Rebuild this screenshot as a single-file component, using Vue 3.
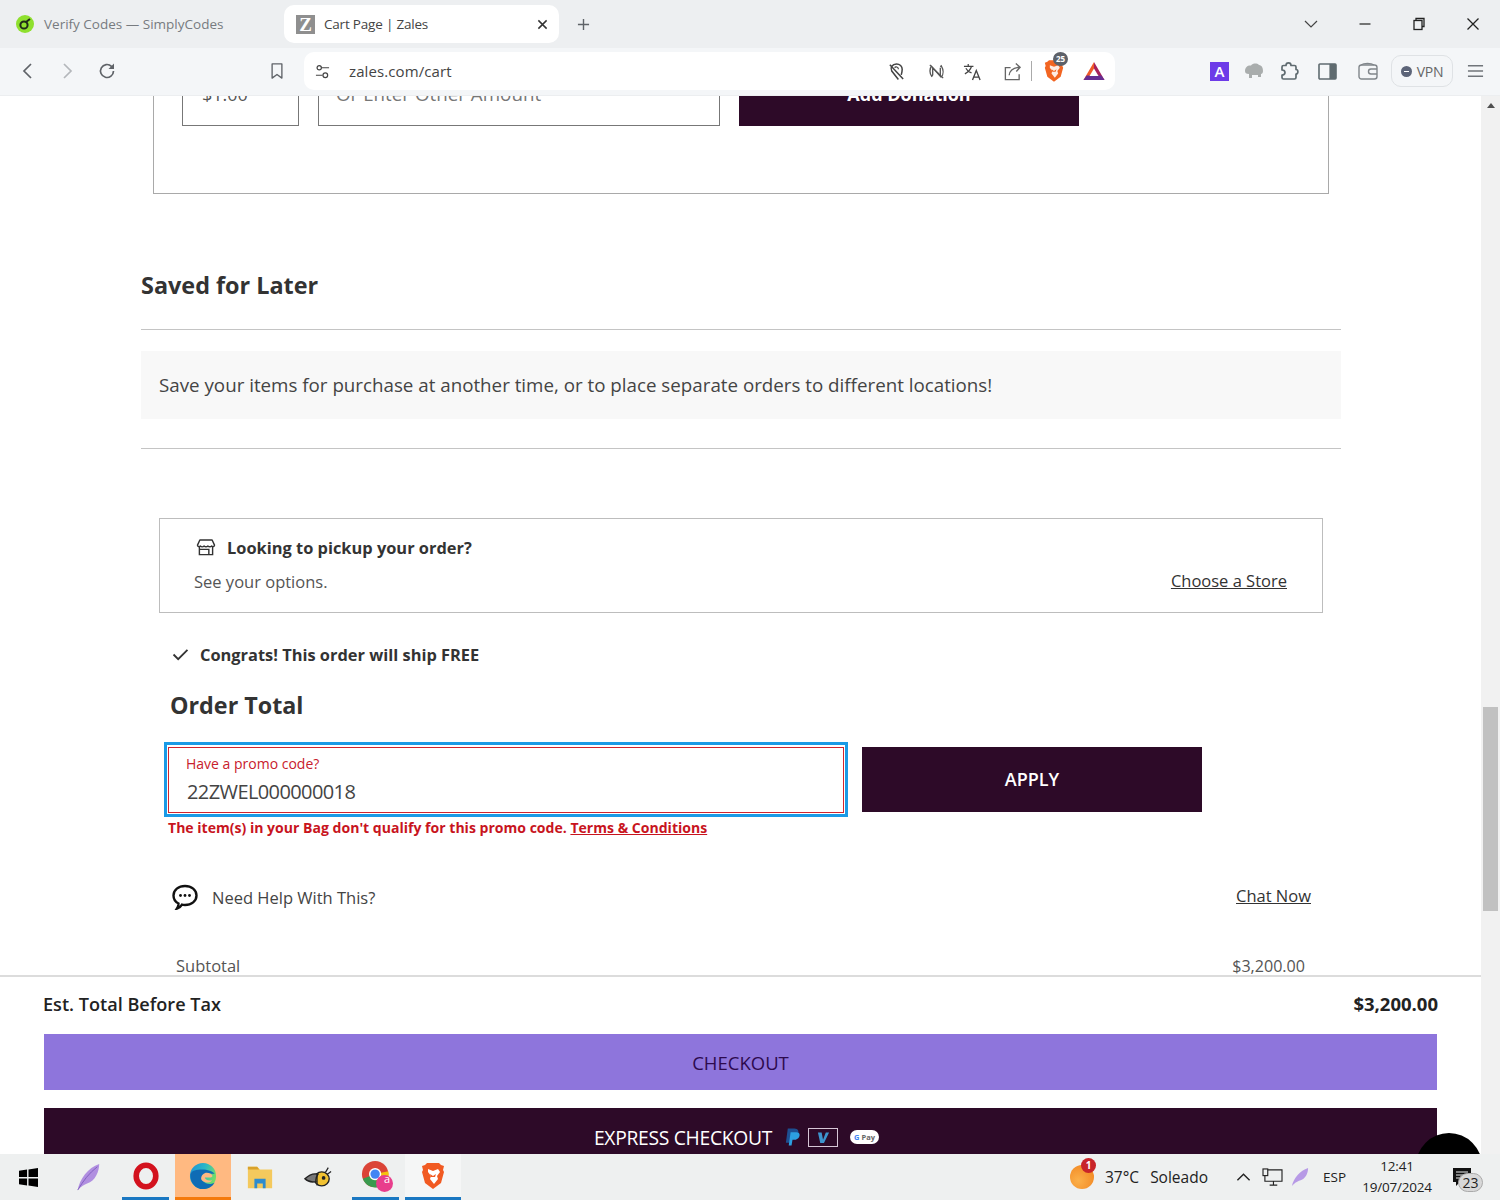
<template>
  <div class="screen">
    <!-- tab strip -->
    <div class="tabstrip">
      <div class="tab">
        <svg class="favicon" viewBox="0 0 18 18"><circle cx="9" cy="9" r="9" fill="#8fe02e"/><circle cx="8" cy="10" r="3.600" fill="none" stroke="#1f2a1a" stroke-width="2"/><path d="M10 7l4-3" stroke="#1f2a1a" stroke-width="2"/></svg>
        <span>Verify Codes — SimplyCodes</span>
      </div>
      <div class="tab active">
        <span class="z-icon">Z</span>
        <span class="tab-title">Cart Page | Zales</span>
        <svg class="tab-close" viewBox="0 0 12 12"><path d="M1.500 1.500l9 9M10.500 1.500l-9 9" stroke="#333" stroke-width="1.600"/></svg>
      </div>
      <svg class="new-tab" viewBox="0 0 14 14"><path d="M7 1v12M1 7h12" stroke="#5f6368" stroke-width="1.500"/></svg>
      <div class="win-controls">
        <svg class="win-btn chev" viewBox="0 0 14 14"><path d="M1 4l6 6 6-6" fill="none" stroke="#444" stroke-width="1.200"/></svg>
        <svg class="win-btn" viewBox="0 0 14 14"><path d="M1.500 7h11" stroke="#222" stroke-width="1.200"/></svg>
        <svg class="win-btn" viewBox="0 0 14 14"><path d="M4 3.500V1.500h8v8h-2" fill="none" stroke="#222" stroke-width="1.300"/><rect x="2" y="3.500" width="8" height="9" fill="none" stroke="#222" stroke-width="1.300"/></svg>
        <svg class="win-btn" viewBox="0 0 14 14"><path d="M1.500 1.500l11 11M12.500 1.500l-11 11" stroke="#222" stroke-width="1.300"/></svg>
      </div>
    </div>

    <!-- toolbar -->
    <div class="toolbar">
      <svg class="tb-icon back" viewBox="0 0 18 18"><path d="M12 2L5 9l7 7" fill="none" stroke="#5f6368" stroke-width="1.700"/></svg>
      <svg class="tb-icon forward" viewBox="0 0 18 18"><path d="M6 2l7 7-7 7" fill="none" stroke="#b4b7bb" stroke-width="1.700"/></svg>
      <svg class="tb-icon reload" viewBox="0 0 20 20"><path d="M16.500 10a6.500 6.500 0 1 1-2-4.700L16.500 7" fill="none" stroke="#5f6368" stroke-width="1.700"/><path d="M17 2.500V8h-5.500z" fill="#5f6368"/></svg>
      <svg class="tb-icon bookmark" viewBox="0 0 18 20"><path d="M3.500 2h11v16L9 14l-5.500 4z" fill="none" stroke="#5f6368" stroke-width="1.500" stroke-linejoin="round"/></svg>

      <div class="address">
        <svg class="tune" viewBox="0 0 16 16"><circle cx="4.500" cy="4" r="2.300" fill="none" stroke="#444" stroke-width="1.300"/><path d="M7 4h8M1 12h7" stroke="#444" stroke-width="1.300"/><circle cx="11" cy="12" r="2.500" fill="none" stroke="#444" stroke-width="1.300"/></svg>
        <span class="url">zales.com/cart</span>
        <div class="addr-icons">
          <svg class="ai one" viewBox="0 0 20 20"><path d="M12 18.500L5 9.500C3 6 5.500 2 10 2c3.500 0 6 2.500 6 5.500 0 2-.5 4-1 6" fill="none" stroke="#444" stroke-width="1.600"/><path d="M3 3l14 15" stroke="#444" stroke-width="1.600"/><path d="M8 6c1-1.500 4-1 4 1.500" fill="none" stroke="#444" stroke-width="1.300"/></svg>
          <svg class="ai two" viewBox="0 0 20 20"><path d="M5 4C2.500 7 2.500 12 5 15l1-1M15 16c2.500-3 2.500-8 0-12l-1 1M6 14V6l8 9V6" fill="none" stroke="#555" stroke-width="1.400"/><path d="M3 3l14 14" stroke="#555" stroke-width="1.400"/></svg>
          <svg class="ai three" viewBox="0 0 20 20"><path d="M1 4.500h10M5.500 2v2.500M9 4.500C8 8 5.500 10.500 2 12.500M3 6.500c1 2 3 4 6 5" fill="none" stroke="#444" stroke-width="1.300"/><path d="M10 19l4-10 4 10M11.300 16h5.400" fill="none" stroke="#444" stroke-width="1.400"/></svg>
          <svg class="ai four" viewBox="0 0 20 20"><path d="M8 6H2.500v12.500H17V13" fill="none" stroke="#666" stroke-width="1.400"/><path d="M6.500 14c.5-5 4-8 11-8.500M13.500 1.500L18 5.500l-4 4.500" fill="none" stroke="#666" stroke-width="1.400"/></svg>
          <span class="addr-sep"></span>
          <div class="brave-wrap">
            <svg class="brave" viewBox="0 0 24 28"><path d="M6 1h12l2 2 3 1-1 4 1 2-3 11-8 6-8-6L1 10l1-2-1-4 3-1z" fill="#f26522"/><path d="M7 7l5 2 5-2 2 3-3 4 1 3-4 5-4-5 1-3-3-4z" fill="#fff" opacity=".88"/><path d="M9 12l3 2 3-2-1 3h-4z" fill="#f26522"/></svg>
            <span class="shield-badge">25</span>
          </div>
          <svg class="bat" viewBox="0 0 22 20"><path d="M11 1l10.500 18h-5.500L11 10z" fill="#a8205a"/><path d="M11 1L.5 19H6l5-9z" fill="#f05a28"/><path d="M.5 19h21l-3-4.500h-15z" fill="#662d91"/><path d="M11 7.500l4.500 7.500h-9z" fill="#fff"/></svg>
        </div>
      </div>

      <div class="ext-row">
        <span class="ext-a">A</span>
        <svg class="ext elephant" viewBox="0 0 20 18"><path d="M1 9c0-4 3-6 6-5.500C9 1 13 1 15 3c3 .5 4 3 4 6 0 2-1 3-2 3v3h-3v-2H8v3H5v-4C2 12 1 11 1 9z" fill="#a9adad"/></svg>
        <svg class="ext puzzle" viewBox="0 0 20 20"><path d="M3 6c0-1 .5-1.500 1.500-1.500H7C7 1 12 1 12 4.500h3.500c1 0 1.500.5 1.500 1.500v2.500c2.500 0 2.500 4.500 0 4.500v3.500c0 1-.5 1.500-1.500 1.500h-11C3.500 18 3 17.500 3 16.500V14c2 0 3-1 3-2.500S5 9 3 9z" fill="none" stroke="#5f6b70" stroke-width="1.700" stroke-linejoin="round"/></svg>
        <svg class="ext panel" viewBox="0 0 20 18"><rect x="1" y="1" width="18" height="16" rx="1" fill="none" stroke="#5f6b70" stroke-width="1.700"/><rect x="12" y="1" width="7" height="16" fill="#5f6b70"/></svg>
        <svg class="ext wallet" viewBox="0 0 20 18"><rect x="1" y="3" width="18" height="14" rx="2.500" fill="none" stroke="#80868b" stroke-width="1.400"/><path d="M3 3c3-2 10-2 13 0M19 7h-6a2.500 2.500 0 0 0 0 5h6" fill="none" stroke="#80868b" stroke-width="1.400"/></svg>
        <div class="vpn"><span class="vpn-dot"></span>VPN</div>
        <svg class="ext menu" viewBox="0 0 18 14"><path d="M1 1.500h16M1 7h16M1 12.500h16" stroke="#70757a" stroke-width="1.600"/></svg>
      </div>
    </div>

    <!-- viewport -->
    <div class="viewport">
      <div class="page">
        <div class="scroller">
          <div class="donation">
            <div class="select-box"><span>$1.00</span><span class="caret"></span></div>
            <div class="amount-box">Or Enter Other Amount</div>
            <div class="donate-btn">Add Donation</div>
          </div>

          <div class="saved">
            <h2 class="saved-title">Saved for Later</h2>
            <div class="rule first"></div>
            <div class="saved-note">Save your items for purchase at another time, or to place separate orders to different locations!</div>
            <div class="rule second"></div>
          </div>

          <div class="pickup">
            <div class="pickup-head">
              <svg class="store" viewBox="0 0 20 18"><path d="M3.500 1h13l2.500 5.500c0 1.500-2 2-3 1-1 1-3 1-4 0-1 1-3 1-4 0-1 1-3 1-4 0-1 1-3 .5-3-1z" fill="none" stroke="#333" stroke-width="1.500" stroke-linejoin="round"/><path d="M3 8v8.500h14V8M3.500 11h9.500v5.500" fill="none" stroke="#333" stroke-width="1.500"/></svg>
              <b>Looking to pickup your order?</b>
            </div>
            <div class="pickup-foot">
              <span>See your options.</span>
              <a class="link">Choose a Store</a>
            </div>
          </div>

          <div class="congrats">
            <svg class="check" viewBox="0 0 18 14"><path d="M1.500 7l5 5 10-10" fill="none" stroke="#333" stroke-width="2"/></svg>
            <b>Congrats! This order will ship FREE</b>
          </div>

          <h2 class="order-title">Order Total</h2>

          <div class="promo-row">
            <div class="promo-focus">
              <div class="promo-field">
                <div class="promo-label">Have a promo code?</div>
                <div class="promo-value">22ZWEL000000018</div>
              </div>
            </div>
            <div class="apply">APPLY</div>
          </div>
          <div class="promo-error">The item(s) in your Bag don't qualify for this promo code. <a>Terms &amp; Conditions</a></div>

          <div class="help">
            <svg class="bubble" viewBox="0 0 26 26"><path d="M13 2c6.500 0 11.500 4 11.500 9.500S19.500 21 13 21c-1 0-2 0-3-.3-1 1.800-2.500 3-5 3.800 1-1.500 1.500-3 1.500-5C3.500 18 1.500 15 1.500 11.500 1.500 6 6.500 2 13 2z" fill="#fff" stroke="#111" stroke-width="2.400"/><circle cx="8.500" cy="11.500" r="1.400" fill="#111"/><circle cx="13" cy="11.500" r="1.400" fill="#111"/><circle cx="17.500" cy="11.500" r="1.400" fill="#111"/></svg>
            <span class="help-text">Need Help With This?</span>
            <a class="link chat">Chat Now</a>
          </div>

          <div class="subtotal">
            <span>Subtotal</span>
            <span class="subtotal-value">$3,200.00</span>
          </div>
        </div>

        <div class="chat-fab"></div>

        <div class="sticky">
          <div class="est-row">
            <span>Est. Total Before Tax</span>
            <b>$3,200.00</b>
          </div>
          <div class="checkout">CHECKOUT</div>
          <div class="express">
            <span>EXPRESS CHECKOUT</span>
            <svg class="paypal" viewBox="0 0 18 20"><path d="M4 1h7c4 0 5 3 4 6s-3 4-6 4H7l-1 5H2z" fill="#1d4f91"/><path d="M7 5h6c4 0 4 3 3 5s-3 3-5 3H9l-1 6H5z" fill="#2c9fe0"/></svg>
            <span class="venmo"><svg viewBox="0 0 16 14"><path d="M2 1.500h4l1.500 8 3-8h3.500L8.500 13H4.500z" fill="#3d95ce"/></svg></span>
            <span class="gpay"><span class="g">G</span> Pay</span>
          </div>
        </div>
      </div>

      <div class="scrollbar">
        <span class="sb-up"></span>
        <div class="sb-thumb"></div>
      </div>
    </div>

    <!-- taskbar -->
    <div class="taskbar">
      <svg class="win-logo" viewBox="0 0 20 20"><path d="M0 3l8.500-1.300v7.800H0zM10 1.500L20 0v9.500H10zM0 11h8.500v7.500L0 17.200zM10 11h10v9l-10-1.500z" fill="#000"/></svg>
      <div class="task feather-cell">
        <svg class="t-icon" viewBox="0 0 28 30"><path d="M3 29C5 17 14 5 26 1c0 8-4 18-13 21-3 1-6 3-10 7z" fill="#b08fe0"/><path d="M3 29C9 19 15 11 24 4" stroke="#7f5cc0" stroke-width="1" fill="none"/></svg>
      </div>
      <div class="task opera running">
        <svg class="t-icon" viewBox="0 0 28 30"><ellipse cx="14" cy="15" rx="10.500" ry="11.500" fill="none" stroke="#d3121e" stroke-width="6"/></svg>
      </div>
      <div class="task edge">
        <svg class="t-icon edge-icon" viewBox="0 0 30 30">
          <defs>
            <linearGradient id="edgeTop" x1="0" y1="0" x2="1" y2="0.400"><stop offset="0" stop-color="#1b8fd6"/><stop offset=".55" stop-color="#2bb7c8"/><stop offset="1" stop-color="#6fdc6a"/></linearGradient>
          </defs>
          <circle cx="15" cy="15" r="14" fill="url(#edgeTop)"/>
          <path d="M1.500 13C1 22 7 29 15 29c5 0 10-2 12.500-7-3 2-7 2-10 .5-3-1.500-4-4.500-3-7 1-2 3-3 6-3h7C25 10 20 8 14 8 8 8 3 9 1.500 13z" fill="#0f6cb5"/>
          <path d="M13 18c0-4 3-6.500 6-6.500 3 0 5 1 6 3 .5 1-.5 2-2 2h-6c0 2 3 4 8 3-3 3-6 3-8 2-2-.5-4-2-4-3.500z" fill="#ffb981"/>
        </svg>
      </div>
      <div class="task explorer">
        <svg class="t-icon" viewBox="0 0 30 28"><path d="M2 3h10l3 3h13v20H2z" fill="#f4c95d"/><path d="M2 3h10l2 3H2z" fill="#d9a22b"/><path d="M9 16h12v10h-3v-5h-6v5H9z" fill="#2e8ccf"/></svg>
      </div>
      <div class="task bee">
        <svg class="t-icon" viewBox="0 0 30 26"><ellipse cx="19" cy="15" rx="8" ry="7.500" fill="#f1c232" stroke="#222" stroke-width="1.500"/><path d="M1 15c5-5 10-6 14-5-2 3-3 5-2 8-5 1-9 0-12-3z" fill="#777" stroke="#222" stroke-width="1.500"/><circle cx="21" cy="14" r="2" fill="#222"/><path d="M14 9v13M23 8l3-5M25 10l4-3" stroke="#222" stroke-width="1.300"/></svg>
      </div>
      <div class="task chrome running">
        <svg class="t-icon big" viewBox="0 0 34 34"><circle cx="15" cy="15" r="14" fill="#db4437"/><path d="M15 15L29 12a14 14 0 0 1-11 17z" fill="#f4c20d"/><path d="M15 15l3 14A14 14 0 0 1 2 20z" fill="#3a9b4f"/><circle cx="15" cy="15" r="6.500" fill="#fff"/><circle cx="15" cy="15" r="5" fill="#4285f4"/><circle cx="25" cy="25" r="9" fill="#e83e8c"/></svg>
        <span class="profile-a">a</span>
      </div>
      <div class="task brave-task running wide">
        <svg class="t-icon" viewBox="0 0 24 28"><path d="M6 1h12l2 2 3 1-1 4 1 2-3 11-8 6-8-6L1 10l1-2-1-4 3-1z" fill="#f15a22"/><path d="M7 7l5 2 5-2 2 3-3 4 1 3-4 5-4-5 1-3-3-4z" fill="#fff"/><path d="M9 12l3 2 3-2-1 3h-4z" fill="#f15a22"/></svg>
      </div>

      <div class="tray">
        <div class="orb"><span class="orb-badge">1</span></div>
        <span class="temp">37°C</span>
        <span class="sky">Soleado</span>
        <svg class="tray-caret" viewBox="0 0 16 10"><path d="M1.500 8.500L8 2l6.500 6.500" fill="none" stroke="#222" stroke-width="1.500"/></svg>
        <svg class="tray-monitor" viewBox="0 0 22 20"><path d="M5 2h16v12H3V8M8 18h8M12 14v4" fill="none" stroke="#222" stroke-width="1.200"/><rect x="1" y="1" width="5" height="7" fill="#eef0f0" stroke="#222" stroke-width="1.200"/></svg>
        <svg class="tray-feather" viewBox="0 0 20 22"><path d="M1 21C3 12 10 4 19 1c0 6-3 12-9 14-3 1-5 2-9 6z" fill="#b79ae6"/></svg>
        <span class="lang">ESP</span>
        <div class="clock"><span>12:41</span><span>19/07/2024</span></div>
        <div class="notif">
          <svg viewBox="0 0 20 20"><path d="M1 1h18v14H8l-4 4v-4H1z" fill="#111"/><path d="M4 5h12M4 8h12M4 11h8" stroke="#eef0f0" stroke-width="1.200"/></svg>
          <span class="notif-count">23</span>
        </div>
      </div>
    </div>
  </div>
</template>

<script setup>
</script>

<style>
html, body { margin: 0; background: #fff; overflow: hidden; }
</style>

<style scoped>
.screen {
  width: 1500px;
  height: 1200px;
  display: flex;
  flex-direction: column;
  overflow: hidden;
  font-family: "Open Sans", "Liberation Sans", sans-serif;
  color: #333;
  background: #fff;
}

/* tab strip */
.tabstrip {
  height: 48px;
  flex: none;
  background: #edeff1;
  display: flex;
  align-items: flex-start;
  font-size: 14px;
}
.tab {
  height: 38px;
  margin-top: 5px;
  display: flex;
  align-items: center;
  width: 284px;
  box-sizing: border-box;
  padding-left: 16px;
  color: #777b80;
  font-size: 13.500px;
}
.favicon { width: 18px; height: 18px; margin-right: 10px; }
.tab.active {
  width: 275px;
  background: #fff;
  border-radius: 10px;
  padding-left: 12px;
  color: #444;
  letter-spacing: -0.2px;
}
.z-icon {
  width: 19px;
  height: 19px;
  background: #8f8f8f;
  color: #fff;
  font: bold 19px/19px "Liberation Serif", serif;
  text-align: center;
  margin-right: 9px;
}
.tab-title { flex: 1; }
.tab-close { width: 11px; height: 11px; margin-right: 11px; }
.new-tab { width: 13px; height: 13px; margin: 18px 0 0 18px; }
.win-controls { margin-left: auto; display: flex; margin-top: 17px; }
.win-btn { width: 14px; height: 14px; margin-right: 40px; }
.win-btn.chev { margin-right: 40px; }
.win-controls .win-btn:last-child { margin-right: 20px; }

/* toolbar */
.toolbar {
  height: 47px;
  box-sizing: border-box;
  padding-bottom: 1px;
  flex: none;
  background: #f4f6f8;
  display: flex;
  align-items: center;
  position: relative;
  z-index: 2;
  box-shadow: 0 1px 0 #eceef0;
}
.tb-icon { height: 18px; width: 18px; flex: none; }
.back { margin-left: 19px; }
.forward { margin-left: 21px; }
.reload { margin-left: 21px; width: 20px; height: 20px; }
.bookmark { margin-left: 152px; width: 16px; }
.address {
  margin-left: 19px;
  width: 811px;
  height: 38px;
  background: #fff;
  border-radius: 10px;
  display: flex;
  align-items: center;
  flex: none;
}
.tune { width: 15px; height: 15px; margin-left: 11px; }
.url { margin-left: 19px; font-size: 15px; color: #444; letter-spacing: 0.1px; }
.addr-icons { margin-left: auto; display: flex; align-items: center; }
.ai { width: 19px; height: 19px; flex: none; }
.two { margin-left: 21px; }
.three { margin-left: 17px; }
.four { margin-left: 21px; }
.addr-sep { width: 1px; height: 20px; background: #aaa; margin-left: 9px; }
.brave-wrap { position: relative; margin-left: 12px; width: 20px; height: 24px; }
.brave { width: 20px; height: 24px; display: block; }
.shield-badge {
  position: absolute;
  top: -7px;
  left: 9px;
  width: 15px;
  height: 14px;
  border-radius: 50%;
  background: #5c6068;
  color: #fff;
  font-size: 8px;
  font-weight: 700;
  line-height: 14px;
  text-align: center;
}
.bat { width: 22px; height: 20px; margin: 0 10px 0 19px; }
.ext-row { display: flex; align-items: center; flex: none; }
.ext-a {
  width: 19px;
  height: 19px;
  margin-left: 95px;
  background: #6d3be8;
  color: #fff;
  font-size: 15px;
  font-weight: 600;
  line-height: 19px;
  text-align: center;
}
.ext { flex: none; }
.elephant { width: 20px; height: 18px; margin-left: 15px; }
.puzzle { width: 20px; height: 20px; margin-left: 15px; }
.panel { width: 19px; height: 17px; margin-left: 19px; }
.wallet { width: 20px; height: 18px; margin-left: 21px; }
.vpn {
  margin-left: 13px;
  width: 62px;
  height: 32px;
  box-sizing: border-box;
  border: 1px solid #dfe2e5;
  border-radius: 10px;
  display: flex;
  align-items: center;
  justify-content: center;
  gap: 5px;
  font-size: 14px;
  color: #666;
  letter-spacing: -0.3px;
}
.vpn-dot {
  width: 11px;
  height: 11px;
  border-radius: 50%;
  background: #5c6478;
  position: relative;
}
.vpn-dot::after {
  content: "";
  position: absolute;
  left: 3px;
  top: 5px;
  width: 5px;
  height: 1px;
  background: #fff;
}
.menu { width: 17px; height: 14px; margin-left: 14px; }

/* page viewport */
.viewport {
  height: 1059px;
  flex: none;
  display: flex;
  overflow: hidden;
}
.page {
  width: 1481px;
  flex: none;
  position: relative;
  overflow: hidden;
}
.scroller { margin-top: -59px; }
.donation {
  margin-left: 153px;
  width: 1176px;
  box-sizing: border-box;
  border: 1px solid #a9a9a9;
  padding: 25px 0 67px 28px;
  display: flex;
  align-items: stretch;
  height: 158px;
}
.select-box, .amount-box {
  box-sizing: border-box;
  height: 64px;
  border: 1px solid #777;
  display: flex;
  align-items: center;
  color: #555;
  font-size: 18px;
}
.select-box { width: 117px; padding: 0 11px 0 19px; justify-content: space-between; }
.caret { width: 0; height: 0; border: 4px solid transparent; border-top: 4px solid #333; border-bottom: 0; }
.amount-box { width: 402px; margin-left: 19px; padding-left: 17px; color: #777; font-size: 18.800px; }
.donate-btn {
  width: 340px;
  height: 64px;
  margin-left: 19px;
  background: #2d0a28;
  color: #fff;
  font-weight: 700;
  font-size: 18px;
  display: flex;
  align-items: center;
  justify-content: center;
}

.saved { margin: 0 0 0 141px; width: 1200px; }
.saved-title { margin: 75px 0 0; font-size: 23.400px; line-height: 32px; font-weight: 700; color: #333; }
.rule { height: 1px; background: #c4c4c4; }
.rule.first { margin-top: 28px; }
.saved-note {
  margin-top: 21px;
  height: 68px;
  box-sizing: border-box;
  padding-left: 18px;
  background: #f8f8f8;
  font-size: 18.750px;
  line-height: 67px;
  color: #444;
}
.rule.second { margin-top: 29px; }

.pickup {
  margin: 69px 0 0 159px;
  width: 1164px;
  height: 95px;
  box-sizing: border-box;
  border: 1px solid #bdbdbd;
  padding: 16px 35px 0 34px;
}
.pickup-head { display: flex; align-items: center; font-size: 16.400px; height: 24px; color: #333; }
.store { width: 20px; height: 17px; margin: 0 11px 0 2px; }
.pickup-head b { font-weight: 700; }
.pickup-foot {
  margin-top: 10px;
  display: flex;
  justify-content: space-between;
  align-items: center;
  height: 24px;
  font-size: 16.500px;
  color: #555;
}
.link { color: #333; text-decoration: underline; font-size: 16.500px; }
.pickup-foot .link { position: relative; top: -1px; }

.congrats {
  margin: 29px 0 0 172px;
  height: 24px;
  display: flex;
  align-items: center;
  font-size: 16.400px;
}
.check { width: 17px; height: 13px; margin-right: 11px; }
.congrats b { font-weight: 700; }
.order-title {
  margin: 22px 0 0 170px;
  font-size: 23.300px;
  line-height: 34px;
  font-weight: 700;
  color: #333;
}

.promo-row { margin: 20px 0 0 164px; display: flex; align-items: flex-start; }
.promo-focus {
  width: 684px;
  height: 75px;
  box-sizing: border-box;
  border: 3px solid #1a9ae6;
  padding: 2px 1px 1px;
}
.promo-field {
  height: 66px;
  box-sizing: border-box;
  border: 1px solid #d0242e;
  padding: 6px 0 0 17px;
}
.promo-label { font-size: 14px; line-height: 20px; color: #c8202c; }
.promo-value {
  font-size: 20px;
  line-height: 28px;
  margin: 4px 0 0 1px;
  color: #444;
  letter-spacing: -0.600px;
}
.apply {
  width: 340px;
  height: 65px;
  box-sizing: border-box;
  padding-bottom: 2px;
  margin: 5px 0 0 14px;
  background: #2d0a28;
  color: #fff;
  font-size: 18px;
  font-weight: 600;
  display: flex;
  align-items: center;
  justify-content: center;
}
.promo-error {
  margin: 0 0 0 168px;
  font-size: 14.050px;
  line-height: 22px;
  font-weight: 700;
  color: #c8141e;
}
.promo-error a { text-decoration: underline; }

.help {
  margin: 44px 0 0 172px;
  width: 1139px;
  height: 28px;
  display: flex;
  align-items: center;
}
.bubble { width: 26px; height: 26px; }
.help-text { margin-left: 14px; font-size: 16.500px; color: #444; }
.chat { margin-left: auto; position: relative; top: -2px; }

.subtotal {
  margin: 43px 0 0 176px;
  width: 1129px;
  display: flex;
  justify-content: space-between;
  font-size: 16.500px;
  line-height: 24px;
  color: #555;
}
.subtotal-value { font-size: 16.100px; }

/* things over the page */
.chat-fab {
  position: absolute;
  left: 1416px;
  top: 1038px;
  width: 66px;
  height: 66px;
  border-radius: 50%;
  background: #000;
  z-index: 3;
}
.sticky {
  position: absolute;
  left: 0;
  right: 0;
  top: 880px;
  bottom: 0;
  box-sizing: border-box;
  background: #fff;
  border-top: 2px solid #dcdcdc;
  padding: 0 44px 0 44px;
  z-index: 2;
}
.est-row {
  height: 57px;
  box-sizing: border-box;
  padding-bottom: 4px;
  display: flex;
  justify-content: space-between;
  align-items: center;
  font-size: 18.100px;
  font-weight: 600;
  color: #222;
  margin: 0 0 0 -1px;
}
.est-row b { font-weight: 700; position: relative; left: 1px; font-size: 18.500px; }
.checkout {
  height: 56px;
  background: #8e75dc;
  color: #2d0a4e;
  font-size: 18.500px;
  text-align: center;
  line-height: 58px;
}
.express {
  margin-top: 18px;
  height: 46px;
  background: #2d0a28;
  color: #fff;
  font-size: 19.300px;
  display: flex;
  align-items: center;
  justify-content: center;
  padding: 12px 8px 0 0;
  box-sizing: border-box;
  letter-spacing: -0.3px;
  white-space: nowrap;
}
.paypal { width: 17px; height: 20px; margin-left: 12px; }
.venmo {
  width: 30px;
  height: 19px;
  margin-left: 7px;
  box-sizing: border-box;
  border: 1px solid #d6c6d6;
  display: flex;
  align-items: center;
  justify-content: center;
}
.venmo svg { width: 15px; height: 13px; }
.gpay {
  width: 29px;
  height: 14px;
  margin-left: 12px;
  border-radius: 7px;
  background: #fff;
  color: #666;
  font-size: 7.500px;
  font-weight: 700;
  line-height: 14px;
  text-align: center;
  letter-spacing: 0;
}
.g { color: #4285f4; }

.scrollbar {
  width: 19px;
  flex: none;
  background: #f1f1f1;
  position: relative;
}
.sb-up {
  display: block;
  width: 0;
  height: 0;
  margin: 8px auto 0;
  border: 4px solid transparent;
  border-bottom: 5px solid #505050;
  border-top: 0;
}
.sb-thumb {
  position: absolute;
  top: 612px;
  left: 2px;
  width: 15px;
  height: 204px;
  background: #c1c1c1;
}

/* taskbar */
.taskbar {
  height: 46px;
  flex: none;
  background: #eef0f0;
  display: flex;
  align-items: center;
  position: relative;
  z-index: 4;
  font-family: "Open Sans", "Liberation Sans", sans-serif;
  color: #222;
}
.win-logo { width: 19px; height: 19px; margin-left: 19px; flex: none; }
.task {
  height: 46px;
  box-sizing: border-box;
  display: flex;
  align-items: center;
  justify-content: center;
  flex: none;
  position: relative;
}
.t-icon { width: 28px; height: 28px; }
.t-icon.big { width: 32px; height: 32px; margin-left: 2px; }
.feather-cell { width: 28px; margin-left: 36px; }
.opera { width: 47px; margin-left: 20px; }
.running { border-bottom: 3px solid #1a78c2; }
.edge { width: 56px; margin-left: 6px; background: #ffb981; border-bottom: 3px solid #f47a0c; }
.explorer { width: 28px; margin-left: 15px; }
.bee { width: 30px; margin-left: 29px; }
.chrome { width: 47px; margin-left: 19px; }
.brave-task { width: 56px; margin-left: 6px; background: #f5f6f6; }
.profile-a {
  position: absolute;
  left: 26px;
  top: 16px;
  width: 18px;
  color: #fff;
  font-size: 11px;
  line-height: 18px;
  text-align: center;
}
.tray { margin-left: auto; display: flex; align-items: center; height: 46px; }
.orb {
  width: 24px;
  height: 24px;
  border-radius: 50%;
  background: radial-gradient(circle at 35% 65%, #fbb04a, #f0801c);
  position: relative;
}
.orb-badge {
  position: absolute;
  top: -7px;
  left: 11px;
  width: 15px;
  height: 15px;
  border-radius: 50%;
  background: #c8242a;
  color: #fff;
  font-size: 10px;
  font-weight: 700;
  line-height: 15px;
  text-align: center;
}
.temp { margin-left: 11px; font-size: 15.500px; }
.sky { margin-left: 11px; font-size: 15.500px; }
.tray-caret { width: 15px; height: 10px; margin-left: 28px; }
.tray-monitor { width: 21px; height: 19px; margin-left: 11px; }
.tray-feather { width: 18px; height: 20px; margin-left: 8px; }
.lang { margin-left: 14px; font-size: 13.500px; width: 24px; }
.clock {
  margin-left: 13px;
  width: 74px;
  display: flex;
  flex-direction: column;
  align-items: center;
  font-size: 13.500px;
  line-height: 21px;
  letter-spacing: -0.2px;
}
.notif { position: relative; width: 20px; height: 20px; margin: 0 28px 0 18px; }
.notif svg { width: 20px; height: 20px; display: block; }
.notif-count {
  position: absolute;
  left: 6px;
  top: 6px;
  width: 25px;
  height: 19px;
  box-sizing: border-box;
  border: 1px solid #aaa;
  border-radius: 10px;
  background: #d8d8d8;
  font-size: 14px;
  line-height: 17px;
  text-align: center;
}
</style>
